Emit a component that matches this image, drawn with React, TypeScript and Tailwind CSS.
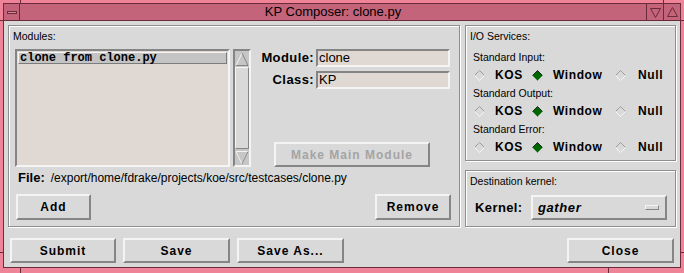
import React from 'react';

/* ------------------ STYLE BITS ------------------ */
const sans = "font-['Liberation_Sans',Arial,sans-serif]";
const raised =
  'border-2 border-t-[#f4f4f4] border-l-[#f4f4f4] border-b-[#858585] border-r-[#858585]';
const sunken =
  'border-2 border-t-[#858585] border-l-[#858585] border-b-[#f4f4f4] border-r-[#f4f4f4]';
const etched = 'border border-[#8e8e8e] shadow-[inset_1px_1px_0_#ffffff,1px_1px_0_#ffffff]';

/* ------------------ SMALL PARTS ------------------ */
function Btn({
  children,
  className = '',
  disabled = false,
}: {
  children: React.ReactNode;
  className?: string;
  disabled?: boolean;
}) {
  return (
    <button
      type="button"
      className={`${raised} bg-[#d9d9d9] flex items-center justify-center text-[12px] font-bold tracking-[1px] ${
        disabled ? 'text-[#a4a4a4]' : 'text-black'
      } ${className}`}
    >
      {children}
    </button>
  );
}

function Diamond({ on }: { on: boolean }) {
  if (on) {
    return (
      <svg width="11" height="11" viewBox="0 0 11 11" className="shrink-0">
        <polygon points="5.5,0.5 10.5,5.5 5.5,10.5 0.5,5.5" fill="#006400" />
        <polyline points="0.5,5.5 5.5,0.5 10.5,5.5" fill="none" stroke="#1c2e1c" />
        <polyline points="0.5,5.5 5.5,10.5 10.5,5.5" fill="none" stroke="#5a9a5a" />
      </svg>
    );
  }
  return (
    <svg width="11" height="11" viewBox="0 0 11 11" className="shrink-0">
      <polyline points="0.5,5.5 5.5,0.5 10.5,5.5" fill="none" stroke="#9c9c9c" />
      <polyline points="0.5,5.5 5.5,10.5 10.5,5.5" fill="none" stroke="#f6f6f6" />
    </svg>
  );
}

function RadioRow() {
  return (
    <div className="h-[20px] flex items-center pl-[8px] text-[12px] font-bold tracking-[0.6px]">
      <div className="w-[58px] flex items-center gap-[10px]">
        <Diamond on={false} />
        <span>KOS</span>
      </div>
      <div className="w-[83px] flex items-center gap-[10px]">
        <Diamond on={true} />
        <span>Window</span>
      </div>
      <div className="flex items-center gap-[12px]">
        <Diamond on={false} />
        <span>Null</span>
      </div>
    </div>
  );
}

function Arrow({ up }: { up: boolean }) {
  return (
    <svg width="14" height="15" viewBox="0 0 14 15">
      {up ? (
        <>
          <polyline points="1,13.5 7,1 " fill="none" stroke="#f4f4f4" />
          <polyline points="7,1 13,13.5 1,13.5" fill="none" stroke="#858585" />
        </>
      ) : (
        <>
          <polyline points="1,1.5 13,1.5 7,14" fill="none" stroke="#f4f4f4" />
          <polyline points="7,14 1,1.5" fill="none" stroke="#f4f4f4" />
          <polyline points="13,1.5 7,14" fill="none" stroke="#858585" />
        </>
      )}
    </svg>
  );
}

/* ------------------ COMPONENT ------------------ */
export default function App() {
  return (
    <div
      className={`${sans} relative w-[684px] h-[273px] bg-[#ef8499] flex flex-col pt-[3px] px-[3px] pb-[5px] overflow-hidden text-black`}
    >
      {/* frame corner notches */}
      <span className="absolute left-[20px] top-0 w-px h-[3px] bg-[#6b2b3a]" />
      <span className="absolute right-[20px] top-0 w-px h-[3px] bg-[#6b2b3a]" />
      <span className="absolute left-0 top-[20px] w-[3px] h-px bg-[#6b2b3a]" />
      <span className="absolute right-0 top-[20px] w-[3px] h-px bg-[#6b2b3a]" />
      <span className="absolute left-[20px] bottom-0 w-px h-[5px] bg-[#6b2b3a]" />
      <span className="absolute right-[75px] bottom-0 w-px h-[5px] bg-[#6b2b3a]" />
      <span className="absolute left-0 bottom-[20px] w-[3px] h-px bg-[#6b2b3a]" />
      <span className="absolute right-0 bottom-[20px] w-[3px] h-px bg-[#6b2b3a]" />

      {/* TITLE BAR */}
      <div className="h-[18px] flex border border-[#6b2b3a] bg-[#c3647a]">
        <div className="w-[16px] border-r border-[#6b2b3a] flex items-center justify-center">
          <div className="w-[10px] h-[3px] border border-[#6b2b3a] bg-[#d98a9a]" />
        </div>
        <div className="flex-1 text-center text-[13px] leading-[16px]">KP Composer: clone.py</div>
        <div className="w-[17px] border-l border-[#6b2b3a] flex items-center justify-center">
          <svg width="11" height="11" viewBox="0 0 11 11">
            <polygon points="0.5,1.5 10.5,1.5 5.5,10.5" fill="none" stroke="#6b2b3a" />
          </svg>
        </div>
        <div className="w-[17px] border-l border-[#6b2b3a] flex items-center justify-center">
          <svg width="11" height="11" viewBox="0 0 11 11">
            <polygon points="5.5,0.5 10.5,9.5 0.5,9.5" fill="none" stroke="#6b2b3a" />
          </svg>
        </div>
      </div>

      {/* CONTENT */}
      <div className="flex-1 bg-[#d9d9d9] border-x border-b border-[#6b2b3a] flex flex-col pt-[4px] pl-[4px] pr-[4px]">
        <div className="h-[202px] flex gap-[5px]">
          {/* MODULES GROUP */}
          <div className={`${etched} w-[452px] flex flex-col`}>
            <div className="pt-[3px] pl-[4px] text-[10.5px] leading-[14px]">Modules:</div>
            <div className="pl-[6px] w-[442px] flex flex-col">
              <div className="mt-[6px] h-[118px] flex">
                <div className={`${sunken} w-[215px] bg-[#e0d9d3] pt-px px-px`}>
                  <div className="h-[12px] border border-t-[#f4f4f4] border-l-[#f4f4f4] border-b-[#7c7c7c] border-r-[#7c7c7c] bg-[#c4c4c4] font-['Liberation_Mono',monospace] font-bold text-[12px] leading-[10px] pl-px">
                    clone from clone.py
                  </div>
                </div>
                <div className={`${sunken} ml-[3px] w-[18px] bg-[#c6c6c6] flex flex-col`}>
                  <div className="h-[16px] flex items-center justify-center">
                    <Arrow up={true} />
                  </div>
                  <div className="flex-1 border border-t-[#f4f4f4] border-l-[#f4f4f4] border-b-[#858585] border-r-[#858585] bg-[#d9d9d9]" />
                  <div className="h-[16px] flex items-center justify-center">
                    <Arrow up={false} />
                  </div>
                </div>
                <div className="ml-[9px] flex flex-col">
                  <div className="h-[18px] flex items-center">
                    <span className="w-[54px] text-right text-[13px] font-bold tracking-[0.4px]">Module:</span>
                    <div className={`${sunken} ml-[2px] w-[134px] h-[18px] bg-[#e0d9d3] text-[13px] leading-[14px] pl-px`}>
                      clone
                    </div>
                  </div>
                  <div className="mt-[4px] h-[18px] flex items-center">
                    <span className="w-[54px] text-right text-[13px] font-bold tracking-[0.4px]">Class:</span>
                    <div className={`${sunken} ml-[2px] w-[134px] h-[18px] bg-[#e0d9d3] text-[13px] leading-[14px] pl-px`}>
                      KP
                    </div>
                  </div>
                  <Btn disabled className="mt-[53px] ml-[14px] w-[156px] h-[26px]">
                    Make Main Module
                  </Btn>
                </div>
              </div>

              <div className="mt-[4px] h-[14px] flex items-center pl-[3px]">
                <span className="text-[13px] font-bold">File:</span>
                <span className="ml-[6px] text-[12px]">/export/home/fdrake/projects/koe/src/testcases/clone.py</span>
              </div>

              <div className="mt-[9px] flex justify-between pl-px w-[436px]">
                <Btn className="w-[75px] h-[26px]">Add</Btn>
                <Btn className="w-[76px] h-[26px]">Remove</Btn>
              </div>
            </div>
          </div>

          {/* RIGHT COLUMN */}
          <div className="w-[211px] flex flex-col">
            <div className={`${etched} h-[136px] flex flex-col`}>
              <div className="pt-[3px] pl-[4px] text-[10.5px] leading-[14px]">I/O Services:</div>
              <div className="mt-[6px] flex flex-col">
                {['Standard Input:', 'Standard Output:', 'Standard Error:'].map(s => (
                  <div key={s}>
                    <div className="h-[16px] pl-[7px] text-[10.5px] leading-[16px]">{s}</div>
                    <RadioRow />
                  </div>
                ))}
              </div>
            </div>

            <div className={`${etched} mt-[9px] h-[57px] flex flex-col`}>
              <div className="pt-[3px] pl-[4px] text-[10.5px] leading-[14px]">Destination kernel:</div>
              <div className="mt-[7px] h-[25px] flex items-center pl-[9px]">
                <span className="w-[56px] text-[13px] font-bold tracking-[0.4px]">Kernel:</span>
                <div className={`${raised} w-[136px] h-[25px] flex items-center pl-[5px]`}>
                  <span className="text-[13px] font-bold italic tracking-[0.6px]">gather</span>
                  <div className="ml-auto mr-[6px] w-[14px] h-[5px] border border-t-[#f4f4f4] border-l-[#f4f4f4] border-b-[#858585] border-r-[#858585]" />
                </div>
              </div>
            </div>
          </div>
        </div>

        {/* BOTTOM BUTTONS */}
        <div className="mt-[11px] h-[25px] flex gap-[7px] pl-[2px] pr-[2px]">
          <Btn className="w-[106px] h-[25px]">Submit</Btn>
          <Btn className="w-[107px] h-[25px]">Save</Btn>
          <Btn className="w-[107px] h-[25px]">Save As...</Btn>
          <Btn className="ml-auto w-[107px] h-[25px]">Close</Btn>
        </div>
      </div>
    </div>
  );
}
